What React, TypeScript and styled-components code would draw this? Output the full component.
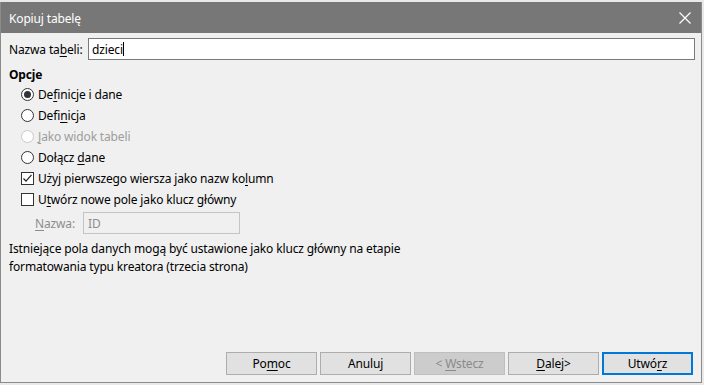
import * as React from 'react'
import styled, { createGlobalStyle, css } from 'styled-components'

const Global = createGlobalStyle`
  html, body {
    margin: 0;
    padding: 0;
    background: #e9e9e9;
    font-family: "Noto Sans", "Liberation Sans", sans-serif;
    font-size: 12px;
    letter-spacing: -0.15px;
    color: #000;
  }
`

const Frame = styled.div`
  margin-top: 2px;
  width: 700px;
  height: 380px;
  border: 1px solid #8c8c8c;
  border-top: none;
  display: flex;
  flex-direction: column;
  background: #f0f0f0;
`

const TitleBar = styled.div`
  height: 31px;
  flex: none;
  background: #777777;
  color: #fff;
  display: flex;
  align-items: center;
  justify-content: space-between;
  padding: 0 10px 0 8px;
`

const Title = styled.span`
  font-size: 12px;
  padding-top: 1px;
`

const Body = styled.div`
  flex: 1;
  display: flex;
  flex-direction: column;
  padding: 5px 6px 0 8px;
`

const NameRow = styled.div`
  display: flex;
  align-items: center;
  height: 22px;
`

const Label = styled.label<{ disabled?: boolean; width: number }>`
  white-space: nowrap;
  flex: none;
  width: ${p => p.width}px;
  ${p => p.disabled && css`color: #8d8d8d;`}
`

const TextBox = styled.div<{ disabled?: boolean }>`
  box-sizing: border-box;
  height: 22px;
  border: 1px solid #7a7a7a;
  background: #fff;
  display: flex;
  align-items: center;
  padding-left: 3px;
  ${p => p.disabled && css`
    border-color: #c4c4c4;
    color: #8d8d8d;
    background: #f0f0f0;
    padding-left: 4px;
  `}
`

const Caret = styled.span`
  display: inline-block;
  width: 1px;
  height: 14px;
  background: #000;
`

const Heading = styled.div`
  font-weight: bold;
  margin-top: 6px;
  height: 17px;
`

const Options = styled.div`
  display: flex;
  flex-direction: column;
  padding-left: 12px;
  margin-top: 1px;
`

const OptionRow = styled.div<{ disabled?: boolean }>`
  display: flex;
  align-items: center;
  height: 21px;
  gap: 4px;
  ${p => p.disabled && css`color: #9d9d9d;`}
`

const Radio = styled.span<{ checked?: boolean; disabled?: boolean }>`
  box-sizing: border-box;
  width: 13px;
  height: 13px;
  border-radius: 50%;
  border: 1px solid ${p => (p.disabled ? '#c9c9c9' : '#333')};
  background: #fff;
  display: flex;
  align-items: center;
  justify-content: center;
  ${p => p.checked && css`
    &::after {
      content: '';
      width: 7px;
      height: 7px;
      border-radius: 50%;
      background: #333;
    }
  `}
`

const Check = styled.span`
  box-sizing: border-box;
  width: 13px;
  height: 13px;
  border: 1px solid #333;
  background: #fff;
  display: flex;
  align-items: center;
  justify-content: center;
`

const KeyRow = styled.div`
  display: flex;
  align-items: center;
  padding-left: 26px;
  margin-top: 2px;
  height: 22px;
`

const Note = styled.p`
  margin: 6px 0 0;
  line-height: 18px;
  width: 420px;
`

const Footer = styled.div`
  margin-top: auto;
  display: flex;
  justify-content: flex-end;
  gap: 3px;
  padding: 0 2px 7px 0;
`

const Button = styled.div<{ disabled?: boolean; primary?: boolean }>`
  box-sizing: border-box;
  width: 91px;
  height: 23px;
  display: flex;
  align-items: center;
  justify-content: center;
  background: #e1e1e1;
  border: 1px solid #adadad;
  white-space: pre;
  ${p => p.disabled && css`
    background: #cccccc;
    border-color: #bfbfbf;
    color: #8a8a8a;
  `}
  ${p => p.primary && css`
    border: 2px solid #0078d7;
  `}
`

const U = styled.u`
  text-underline-offset: 2px;
`

function CloseIcon() {
  return (
    <svg width="12" height="12" viewBox="0 0 12 12">
      <path d="M0.5 0.5 L11.5 11.5 M11.5 0.5 L0.5 11.5" stroke="#fff" strokeWidth="1.2" fill="none" />
    </svg>
  )
}

function Tick() {
  return (
    <svg width="11" height="11" viewBox="0 0 11 11">
      <path d="M1.5 5.5 L4 8.2 L9.5 1.8" stroke="#222" strokeWidth="1.2" fill="none" />
    </svg>
  )
}

export default function App() {
  return (
    <>
      <Global />
      <Frame>
        <TitleBar>
          <Title>Kopiuj tabelę</Title>
          <CloseIcon />
        </TitleBar>
        <Body>
          <NameRow>
            <Label width={79}>Nazwa ta<U>b</U>eli:</Label>
            <TextBox style={{ flex: 1 }}>dzieci<Caret /></TextBox>
          </NameRow>
          <Heading>Opcje</Heading>
          <Options>
            <OptionRow><Radio checked /><span>De<U>f</U>inicje i dane</span></OptionRow>
            <OptionRow><Radio /><span>Defi<U>n</U>icja</span></OptionRow>
            <OptionRow disabled><Radio disabled /><span><U>J</U>ako widok tabeli</span></OptionRow>
            <OptionRow><Radio /><span>Dołącz <U>d</U>ane</span></OptionRow>
            <OptionRow><Check><Tick /></Check><span>Użyj pierwszego wiersza jako nazw ko<U>l</U>umn</span></OptionRow>
            <OptionRow><Check /><span>U<U>t</U>wórz nowe pole jako klucz główny</span></OptionRow>
          </Options>
          <KeyRow>
            <Label disabled width={48}><U>N</U>azwa:</Label>
            <TextBox disabled style={{ width: 157 }}>ID</TextBox>
          </KeyRow>
          <Note>
            Istniejące pola danych mogą być ustawione jako klucz główny na etapie formatowania typu kreatora (trzecia strona)
          </Note>
          <Footer>
            <Button><span>Po<U>m</U>oc</span></Button>
            <Button><span>Anuluj</span></Button>
            <Button disabled><span>&lt; <U>W</U>stecz</span></Button>
            <Button><span><U>D</U>alej&gt;</span></Button>
            <Button primary><span>Utwó<U>r</U>z</span></Button>
          </Footer>
        </Body>
      </Frame>
    </>
  )
}
